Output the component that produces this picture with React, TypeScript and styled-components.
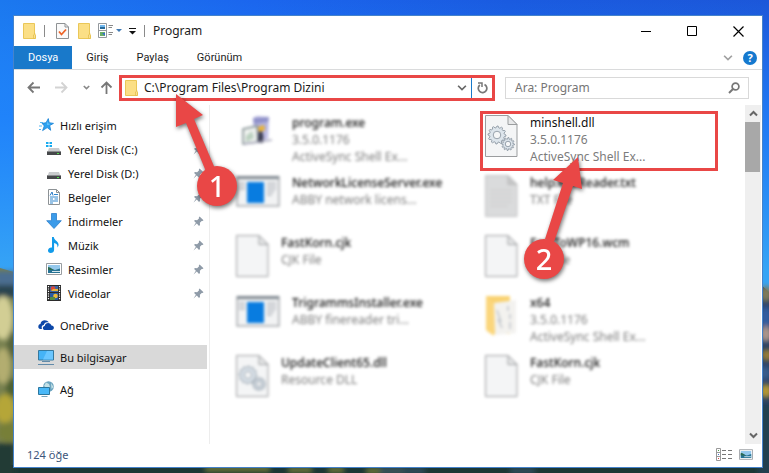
import React from "react";
import styled, { createGlobalStyle, css } from "styled-components";

const RED = "#e94746";

const GlobalStyle = createGlobalStyle`
  * { box-sizing: border-box; }
  html, body { margin: 0; padding: 0; }
  body, button, input {
    font-family: "Noto Sans", "Open Sans", sans-serif;
    font-size: 12px;
    color: #1c1c1c;
  }
  button { border: 0; padding: 0; background: none; cursor: pointer; }
  ul { list-style: none; margin: 0; padding: 0; }
  svg { display: block; flex: none; }
`;

const Desktop = styled.div`
  position: relative;
  display: flex;
  min-height: 100vh;
  padding: 15px 6px 5px 13px;
  overflow: hidden;
`;

const Wallpaper = styled.svg`
  position: absolute;
  inset: 0;
  width: 100%;
  height: 100%;
`;

const Window = styled.main`
  position: relative;
  flex: 1;
  min-width: 0;
  display: flex;
  flex-direction: column;
  background: #fff;
  border: 1px solid #4583cb;
`;

const TitleBar = styled.header`
  display: flex;
  align-items: center;
  height: 30px;
  padding: 0 1px 0 9px;
`;

const QuickTools = styled.div`
  display: flex;
  align-items: center;
`;

const Rule = styled.span`
  width: 1px;
  height: 12px;
  margin-left: 8px;
  background: #8a8a8a;
`;

const ToolButton = styled.button<{ $before: number }>`
  margin-left: ${(p) => p.$before}px;
`;

const Title = styled.h1`
  flex: 1;
  margin: 0 0 0 8px;
  font-size: 12px;
  font-weight: 400;
  line-height: 20px;
`;

const CaptionButton = styled.button`
  width: 46px;
  height: 30px;
  display: grid;
  place-items: center;
`;

const Ribbon = styled.nav`
  display: flex;
  height: 24px;
  border-bottom: 1px solid #dadbdc;
`;

const RibbonTab = styled.button<{ $active?: boolean }>`
  padding: 0 14px;
  font-family: Roboto, sans-serif;
  font-size: 11px;
  line-height: 23px;
  ${(p) =>
    p.$active &&
    css`
      background: #1979ca;
      color: #fff;
    `}
`;

const RibbonEnd = styled.div`
  display: flex;
  align-items: center;
  gap: 10px;
  margin-left: auto;
  padding-right: 5px;
`;

const HelpButton = styled.button`
  width: 14px;
  height: 14px;
  border-radius: 50%;
  background: #1579cf;
  color: #fff;
  font-size: 11px;
  font-weight: 700;
  line-height: 14px;
  text-align: center;
`;

const NavigationRow = styled.div`
  display: flex;
  align-items: center;
  height: 35px;
  padding: 0 13px;
`;

const Arrows = styled.div`
  display: flex;
  align-items: center;
  width: 92px;
  gap: 15px;
`;

const RecentGroup = styled.div`
  display: flex;
  align-items: center;
  gap: 10px;
`;

const AddressBox = styled.div`
  position: relative;
  z-index: 3;
  flex: 367;
  min-width: 0;
  height: 26px;
  display: flex;
  align-items: center;
  border: 3px solid ${RED};
  padding-left: 3px;
  background: #fff;
`;

const AddressInput = styled.input`
  flex: 1;
  min-width: 0;
  height: 20px;
  border: 0;
  outline: 0;
  padding: 0 0 0 6px;
  background: none;
`;

const RefreshButton = styled.button`
  width: 21px;
  height: 20px;
  display: grid;
  place-items: center;
  margin-left: 4px;
  border-left: 1px solid #1979ca;
`;

const SearchBox = styled.label`
  flex: 225;
  min-width: 0;
  height: 22px;
  margin-left: 10px;
  display: flex;
  align-items: center;
  padding: 0 8px 0 9px;
  border: 1px solid #d9d9d9;
`;

const SearchInput = styled.input`
  flex: 1;
  min-width: 0;
  height: 20px;
  border: 0;
  outline: 0;
  padding: 0;
  background: none;
  &::placeholder { color: #767676; opacity: 1; }
`;

const Body = styled.div`
  flex: 1;
  display: flex;
`;

const Sidebar = styled.nav`
  width: 196px;
  padding: 8px 2px 0 0;
  border-right: 1px solid #ededed;
`;

const Place = styled.a<{ $level?: number; $selected?: boolean; $apart?: boolean }>`
  display: flex;
  align-items: center;
  height: 24px;
  margin-top: ${(p) => (p.$apart ? 8 : 0)}px;
  padding: 0 3px 0 ${(p) => (p.$level === 2 ? 32 : 24)}px;
  color: #111;
  font-size: 11px;
  text-decoration: none;
  background: ${(p) => (p.$selected ? "#d9d9d9" : "transparent")};
  span { flex: 1; margin-left: 6px; }
`;

const FileList = styled.ul`
  flex: 1;
  min-width: 0;
  display: grid;
  grid-template-columns: repeat(2, minmax(0, 1fr));
  grid-auto-rows: 60px;
  column-gap: 11px;
  padding: 6px 27px 0 21px;
`;

const Tile = styled.li<{ $marked?: boolean }>`
  position: relative;
  z-index: ${(p) => (p.$marked ? 2 : 0)};
  border: 3px solid ${(p) => (p.$marked ? RED : "transparent")};
  padding-left: 2px;
`;

const TileContent = styled.div<{ $soft?: boolean }>`
  display: flex;
  gap: 12px;
  filter: ${(p) => (p.$soft ? "blur(1.4px)" : "none")};
`;

const FileText = styled.div<{ $soft?: boolean }>`
  min-width: 0;
  line-height: 17px;
  color: #7c7c7c;
  white-space: nowrap;
  div:first-child {
    color: #111;
    font-weight: ${(p) => (p.$soft ? 500 : 400)};
  }
`;

const ScrollTrack = styled.div`
  display: flex;
  flex-direction: column;
  align-items: stretch;
  width: 16px;
  margin-right: 1px;
  background: #efefef;
`;

const ScrollButton = styled.button`
  height: 17px;
  display: grid;
  place-items: center;
  &:last-child { margin-top: auto; }
`;

const ScrollThumb = styled.div`
  height: 50px;
  margin-right: 1px;
  background: #a8a8a8;
`;

const StatusBar = styled.footer`
  display: flex;
  align-items: center;
  gap: 6px;
  height: 23px;
  padding: 0 9px 3px 13px;
  color: #3d567b;
  font-size: 11px;
  span { flex: 1; }
`;

const Pointer = styled.div<{ $x: number; $y: number; $h: number; $w: number }>`
  position: absolute;
  left: ${(p) => p.$x}px;
  top: ${(p) => p.$y}px;
  width: ${(p) => p.$w}px;
  height: ${(p) => p.$h}px;
  pointer-events: none;
  filter: drop-shadow(1px 2px 2px rgba(0, 0, 0, 0.55));
`;

const Badge = styled.span<{ $right?: boolean }>`
  position: absolute;
  bottom: 0;
  ${(p) => (p.$right ? "right: 0;" : "left: 0;")}
  width: 40px;
  height: 40px;
  border-radius: 50%;
  background: ${RED};
  color: #fff;
  font: 500 29px/40px "Noto Sans", sans-serif;
  text-align: center;
`;

const FolderIcon = () => (
  <svg width="13" height="16" viewBox="0 0 13 16">
    <path d="M.5.5h11v11.3l1 .5v3.2H.5z" fill="#fbdf86" stroke="#eac758" />
    <path d="M10.5 15.5v-3.6l1.6-1.2v4.8z" fill="#fff0b8" stroke="#e3b93d" strokeWidth=".7" />
  </svg>
);

const Chevron = ({ up, color = "#666", w = 9, bold = 1.5 }: { up?: boolean; color?: string; w?: number; bold?: number }) => (
  <svg width={w} height={w} viewBox="0 0 9 9">
    <path d={up ? "M1 6.5 4.5 3 8 6.5" : "M1 2.5 4.5 6 8 2.5"} fill="none" stroke={color} strokeWidth={bold} />
  </svg>
);

const ARROW_PATHS = {
  left: "M13 6.5H1.5M6.5 1.5l-5 5 5 5",
  right: "M0 6.5h11.5M6.5 1.5l5 5-5 5",
  up: "M6.5 13V1.5M1.5 6.5l5-5 5 5",
};

const ArrowIcon = ({ kind }: { kind: keyof typeof ARROW_PATHS }) => (
  <svg width="13" height="13" viewBox="0 0 13 13" fill="none" stroke={kind === "right" ? "#d3d3d3" : "#777"} strokeWidth="1.8">
    <path d={ARROW_PATHS[kind]} />
  </svg>
);

const PinIcon = () => (
  <svg width="11" height="11" viewBox="0 0 11 11">
    <path d="m6.6.5 3.9 3.8-1 .8-.8-.2-1.8 1.9.1 2.2-1 .9-2.2-2.3L.5 10.4l2.4-3.6L1.1 5l.8-.9 2.2.1 2-1.9-.3-.9z" fill="#8f9ba8" />
  </svg>
);

const StarIcon = () => (
  <svg width="16" height="14" viewBox="-1 0 16 14">
    <path d="m9.3.6.9 4.1 4.3.7-3.8 2.1 1 4.8-3.5-2.7-4.6 3 1.7-4.7L3 5.3l4-.5z" fill="#2da2f0" stroke="#1780d4" strokeWidth=".8" />
    <path d="M1 4.5h3M0 8h3M0 11.5h2" stroke="#58b7f2" />
    <path d="m8.8 3 .5 2.8 2.5.3-3.7.8z" fill="#77cdff" />
  </svg>
);

const DiskIcon = ({ system }: { system?: boolean }) => (
  <svg width="16" height="16" viewBox="0 0 16 16">
    {system && <path d="M0 1h2.5v2H0zM3.5 1H6v2H3.5zM0 4h2.5v2H0zM3.5 4H6v2H3.5z" fill="#18abef" />}
    <path d="m3 7-1.5 4h13L13 7z" fill="#c9cbcd" />
    <path d="M1 10.5h14V14H1z" fill="#46484a" />
    <path d="M1 10.5h14" stroke="#8b8d8f" />
    <path d="M11 12h2v1h-2z" fill="#52e04d" />
  </svg>
);

const DocumentIcon = () => (
  <svg width="16" height="16" viewBox="0 0 16 16">
    <path d="M2.5.5h8l3 3v12h-11z" fill="#fff" stroke="#8d9295" />
    <path d="M10.5.5v3h3" fill="none" stroke="#8d9295" />
    <path d="M4 6.5 6 3l1 3.5" fill="none" stroke="#287bc8" />
    <path d="M8 5.5h4M4 8h8M4 10h3M8.5 10H12M4 12h8M4 14h3" stroke="#3187ce" />
  </svg>
);

const DownloadIcon = () => (
  <svg width="16" height="16" viewBox="0 0 16 16">
    <path d="M5.5.5h5v7.2h4.8L8 15.5.7 7.7h4.8z" fill="#3b9be9" stroke="#2b7fcb" strokeWidth=".8" />
  </svg>
);

const MusicIcon = () => (
  <svg width="16" height="16" viewBox="0 0 16 16">
    <path d="M6 0h1.8c.2 3.5 5.6 4.400 4.700 8.600-.3 1-.8 1.500-1.200 1.900.9-3-1.500-4.200-3.200-4.600v6.800C8.100 15 6.500 16 4.700 16 2.900 16 1.800 14.800 2 13.200c.2-2 2.300-3.200 4-2.700z" fill="#129bea" />
  </svg>
);

const PictureIcon = ({ w = 16, h = 12 }: { w?: number; h?: number }) => (
  <svg width={w} height={h} viewBox="0 0 16 12">
    <path d="M.5.5h15v11H.5z" fill="#fff" stroke="#989da1" />
    <path d="M2 2h12v8H2z" fill="#94c8ec" />
    <path d="m2 5 3 1 4 1 5-1.500V10H2z" fill="#267394" />
    <path d="m2 4 2 .5L8 7H2z" fill="#2b6950" />
    <path d="M6 8.500h8" stroke="#d5e7ee" />
  </svg>
);

const VideoIcon = () => (
  <svg width="16" height="16" viewBox="0 0 16 16">
    <path d="M1 0h14v16H1z" fill="#2b2b2b" />
    <path d="M2.500 1v14M13.500 1v14" stroke="#fff" strokeWidth="1.200" strokeDasharray="1.200 1.200" />
    <path d="M4 1h8v6H4z" fill="#3b67a6" />
    <path d="M4 8h8v7H4z" fill="#285ba3" />
    <circle cx="7" cy="3.500" r="2.300" fill="#db493a" />
    <path d="M7 4h5v2H5z" fill="#e5b33c" />
    <circle cx="9.500" cy="11" r="2.300" fill="#edba38" />
    <path d="M4 12h5v3H4z" fill="#568a43" />
  </svg>
);

const CloudIcon = () => (
  <svg width="16" height="16" viewBox="0 0 16 16">
    <path d="M1 11.500c-1.500-1.800-.4-4.200 1.500-4.400C2.500 3.500 8 1.500 11 5.500 7.500 4.300 6 6.500 5.800 8 3.600 8.200 3.400 10.500 4 12H2z" fill="#0c47a8" />
    <path d="M6.500 13C4.300 12.500 4.300 9.300 6.700 9c.4-3.800 5.800-4.200 6.700-.5 3.400.1 3.200 4.500.3 4.500z" fill="#0c47a8" />
  </svg>
);

const ComputerIcon = () => (
  <svg width="16" height="16" viewBox="0 0 16 16">
    <path d="M.5 1.500h15v9.500H.5z" fill="#45b3f6" stroke="#36799e" />
    <path d="M9 2h6v8.500H5z" fill="#6ac6ff" />
    <path d="M4 12.500h8M0 15.500h16" stroke="#628baa" />
  </svg>
);

const NetworkIcon = () => (
  <svg width="16" height="16" viewBox="0 0 16 16">
    <circle cx="10.500" cy="5.500" r="5.300" fill="#6ca4bf" />
    <path d="M8 1.500 11 3l1 3-2 2-4-3zM13 2l2.500 4-2 2z" fill="#c4e1e6" />
    <path d="M.5 6.500h11v7H.5z" fill="#49b8f8" stroke="#2c779e" />
    <path d="M3.500 15.500h6" stroke="#78a5bd" />
  </svg>
);

const cogPath = (cx: number, cy: number, r: number) => {
  const steps = 48;
  return (
    Array.from({ length: steps }, (_, i) => {
      const a = (i / steps) * Math.PI * 2;
      const d = i % 4 < 2 ? r : r - 1.7;
      return `${i ? "L" : "M"}${(cx + d * Math.cos(a)).toFixed(2)} ${(cy + d * Math.sin(a)).toFixed(2)}`;
    }).join("") + "Z"
  );
};

const Cog = ({ x, y, r }: { x: number; y: number; r: number }) => (
  <g fill="#dde5ec" stroke="#8d99a4" strokeWidth=".9">
    <path d={cogPath(x, y, r)} />
    <circle cx={x} cy={y} r={r * 0.42} fill="#f5f6f7" />
  </g>
);

const FileIcon = ({ cogs, dark }: { cogs?: boolean; dark?: boolean }) => (
  <svg width="33" height="44" viewBox="0 0 33 44">
    <path d="M.5 1.500H23l9 9v32H.5z" fill={dark ? "#dadbdc" : "#f4f5f6"} stroke={dark ? "#c0c1c2" : "#9b9d9f"} />
    <path d="M23 1.500v9h9z" fill={dark ? "#c6c7c8" : "#e7e8e9"} stroke={dark ? "#b8b8b8" : "#9b9d9f"} />
    {dark && <path d="M5 16h22M5 20h22M5 24h22M5 28h22M5 32h18" stroke="#ccc" />}
    {cogs && (
      <>
        <Cog x={12} y={21} r={9} />
        <Cog x={23} y={30} r={6.5} />
      </>
    )}
  </svg>
);

const AppIcon = () => (
  <svg width="44" height="34" viewBox="0 0 44 34">
    <path d="M1 3h42v29H1z" fill="#f2f3f4" stroke="#a9acaf" strokeWidth="1.500" />
    <path d="M1 3.500h42" stroke="#7e878f" strokeWidth="3" />
    <path d="M11 8h17v21H11z" fill="#087ce0" />
    <path d="M3 9h6M3 12h6M3 15h6M31 9h9M31 12h9M31 15h9M31 18h7M31 21h5" stroke="#b7bbc0" strokeWidth="1.500" />
  </svg>
);

const SetupIcon = () => (
  <svg width="44" height="34" viewBox="0 0 44 34">
    <path d="m17 4 4-2 12 1-1 22-14 3z" fill="#bdbce3" />
    <path d="m17 4 16-1-1 5-14 2z" fill="#8f91c9" />
    <path d="m20 12 11-1M20 15l11-1" stroke="#9fa0d0" />
    <path d="M7 15 21 12l1 16-15 2z" fill="#f0f3f0" stroke="#7b898c" strokeWidth="1.500" />
    <path d="m10 22 6-5 2 7-8 4z" fill="#bad0bf" />
    <path d="M23 16c4-1 5 6 4 13h-6c2-4 1-9 2-13z" fill="#3b3c50" />
    <path d="m22 13 6-2 1 5-6 2z" fill="#ecb535" />
    <path d="m8 30 14-2 14-2" stroke="#a6a6ba" strokeWidth="1.500" />
  </svg>
);

const BigFolderIcon = () => (
  <svg width="33" height="44" viewBox="0 0 33 44">
    <path d="M1 2h24v38H7L1 36z" fill="#f9d271" />
    <path d="m9 9 22-3v33L10 41z" fill="#f3f2ef" />
    <path d="m12 16 4 12M23 12v5M25 20v5M13 25l4 9M25 28v7" stroke="#bfc4ca" strokeWidth="1.500" />
    <path d="m1 2 8 8v32l-7-5z" fill="#fbd67c" />
  </svg>
);

type IconKind = "setup" | "app" | "file" | "dll" | "text" | "folder";

const FILES: { name: string; lines: string[]; icon: IconKind; marked?: boolean }[] = [
  { name: "program.exe", lines: ["3.5.0.1176", "ActiveSync Shell Ex..."], icon: "setup" },
  { name: "minshell.dll", lines: ["3.5.0.1176", "ActiveSync Shell Ex..."], icon: "dll", marked: true },
  { name: "NetworkLicenseServer.exe", lines: ["ABBY network licens..."], icon: "app" },
  { name: "help.exeReader.txt", lines: ["TXT File"], icon: "text" },
  { name: "FastKorn.cjk", lines: ["CJK File"], icon: "file" },
  { name: "FastToWP16.wcm", lines: ["CJK File"], icon: "file" },
  { name: "TrigrammsInstaller.exe", lines: ["ABBY finereader tri..."], icon: "app" },
  { name: "x64", lines: ["3.5.0.1176", "ActiveSync Shell Ex..."], icon: "folder" },
  { name: "UpdateClient65.dll", lines: ["Resource DLL"], icon: "dll" },
  { name: "FastKorn.cjk", lines: ["CJK File"], icon: "file" },
];

const FILE_ICONS: Record<IconKind, React.ReactNode> = {
  setup: <SetupIcon />,
  app: <AppIcon />,
  file: <FileIcon />,
  dll: <FileIcon cogs />,
  text: <FileIcon dark />,
  folder: <BigFolderIcon />,
};

const PLACES = [
  { label: "Yerel Disk (C:)", icon: <DiskIcon system /> },
  { label: "Yerel Disk (D:)", icon: <DiskIcon /> },
  { label: "Belgeler", icon: <DocumentIcon /> },
  { label: "İndirmeler", icon: <DownloadIcon /> },
  { label: "Müzik", icon: <MusicIcon /> },
  { label: "Resimler", icon: <PictureIcon /> },
  { label: "Videolar", icon: <VideoIcon /> },
];

const Scenery = () => (
  <Wallpaper viewBox="0 0 769 473" preserveAspectRatio="none" aria-hidden="true">
    <defs>
      <linearGradient id="sky" x2="1">
        <stop offset="0" stopColor="#1b78ef" />
        <stop offset=".33" stopColor="#1b66ee" />
        <stop offset=".66" stopColor="#1a5be0" />
        <stop offset="1" stopColor="#1c57d9" />
      </linearGradient>
      <linearGradient id="glow" x2="0" y2="1">
        <stop offset="0" stopColor="#2490ff" stopOpacity="0" />
        <stop offset=".25" stopColor="#2288ff" stopOpacity=".7" />
        <stop offset=".57" stopColor="#36a4f5" />
      </linearGradient>
      <filter id="haze"><feGaussianBlur stdDeviation="2.5" /></filter>
    </defs>
    <path d="M0 0h769v473H0z" fill="url(#sky)" />
    <path d="M0 0h769v473H0z" fill="url(#glow)" />
    <path d="M0 268 14 272V473H0z" fill="#77804f" />
    <path d="M760 284 769 292V473H760z" fill="#273f62" />
    <path d="M0 465h769v8H0z" fill="#1b3734" />
    <g filter="url(#haze)">
      <path d="M-5 271h22v15H-5z" fill="#4b6e91" />
      <path d="M-5 285h22v13H-5z" fill="#2c4550" />
      <ellipse cx="3" cy="318" rx="10" ry="22" fill="#d2ce94" />
      <ellipse cx="13" cy="345" rx="6" ry="14" fill="#56633b" />
      <ellipse cx="3" cy="366" rx="8" ry="18" fill="#b3ad70" />
      <ellipse cx="12" cy="388" rx="6" ry="10" fill="#4e6033" />
      <ellipse cx="5" cy="409" rx="10" ry="15" fill="#b5a638" />
      <ellipse cx="8" cy="432" rx="10" ry="10" fill="#777f38" />
      <path d="M-5 443h20v36H-5z" fill="#213b36" />
      <ellipse cx="766" cy="294" rx="6" ry="8" fill="#807b58" />
      <ellipse cx="766" cy="317" rx="6" ry="11" fill="#315da0" />
      <ellipse cx="766" cy="334" rx="6" ry="8" fill="#ac958a" />
      <ellipse cx="767" cy="355" rx="6" ry="6" fill="#967b35" />
      <ellipse cx="765" cy="373" rx="6" ry="7" fill="#385c8b" />
      <ellipse cx="766" cy="391" rx="6" ry="7" fill="#b69832" />
      <path d="M758 405h16v74h-16z" fill="#22404f" />
      <path d="M205 469h65M288 470h24M328 470h16M366 471h38" stroke="#777e38" strokeWidth="5" />
      <path d="M380 471h45M510 471h25" stroke="#38546c" strokeWidth="4" />
    </g>
  </Wallpaper>
);

export default function App() {
  return (
    <>
      <GlobalStyle />
      <Desktop>
        <Scenery />
        <Window>
          <TitleBar>
            <QuickTools>
              <FolderIcon />
              <Rule />
              <ToolButton $before={11} aria-label="Özellikler">
                <svg width="13" height="16" viewBox="0 0 13 16">
                  <path d="M.5.5H9L12.500 4v11.500H.5z" fill="#fafafa" stroke="#8f9294" />
                  <path d="M9 .5V4h3.500" fill="none" stroke="#8f9294" />
                  <path d="m3 8.500 2.500 3L10 6.500" fill="none" stroke="#ee6428" strokeWidth="1.800" />
                </svg>
              </ToolButton>
              <ToolButton $before={9} aria-label="Yeni klasör"><FolderIcon /></ToolButton>
              <ToolButton $before={7} aria-label="Görünüm seçenekleri">
                <svg width="24" height="16" viewBox="0 0 24 16">
                  <path d="M.5.5h8v14h-8zM.5 7.500h8" fill="#fff" stroke="#94999d" />
                  <path d="M2 2h5v4H2z" fill="#70b7ee" />
                  <path d="M2 4h5v2H2z" fill="#286b9b" />
                  <path d="M2 9h5v4H2z" fill="#68ae67" />
                  <path d="M4 10h3v3z" fill="#376fca" />
                  <path d="M10.500 2.500H15M10.500 4.500H14M10.500 9.500H15M10.500 11.500H14" stroke="#898989" />
                  <path d="M18 6h6l-3 3z" fill="#3f7ab5" />
                </svg>
              </ToolButton>
              <ToolButton $before={7} aria-label="Özelleştir">
                <svg width="7" height="8" viewBox="0 0 7 8">
                  <path d="M0 1.500h7" stroke="#111" />
                  <path d="M0 4h7L3.500 7.500z" fill="#111" />
                </svg>
              </ToolButton>
              <Rule />
            </QuickTools>
            <Title>Program</Title>
            <CaptionButton aria-label="Simge durumuna küçült">
              <svg width="10" height="10"><path d="M0 5.500h10" stroke="#000" /></svg>
            </CaptionButton>
            <CaptionButton aria-label="Ekranı kapla">
              <svg width="10" height="10"><path d="M.5.5h9v9h-9z" fill="none" stroke="#000" /></svg>
            </CaptionButton>
            <CaptionButton aria-label="Kapat">
              <svg width="11" height="11"><path d="m.5.5 10 10M10.500.5l-10 10" stroke="#000" strokeWidth="1.200" /></svg>
            </CaptionButton>
          </TitleBar>

          <Ribbon>
            <RibbonTab $active>Dosya</RibbonTab>
            <RibbonTab>Giriş</RibbonTab>
            <RibbonTab>Paylaş</RibbonTab>
            <RibbonTab>Görünüm</RibbonTab>
            <RibbonEnd>
              <button aria-label="Şeridi genişlet"><Chevron color="#a0a0a0" w={10} /></button>
              <HelpButton aria-label="Yardım">?</HelpButton>
            </RibbonEnd>
          </Ribbon>

          <NavigationRow>
            <Arrows>
              <button aria-label="Geri"><ArrowIcon kind="left" /></button>
              <button aria-label="İleri"><ArrowIcon kind="right" /></button>
              <RecentGroup>
                <button aria-label="Son konumlar"><Chevron w={7} color="#888" bold={2} /></button>
                <button aria-label="Yukarı"><ArrowIcon kind="up" /></button>
              </RecentGroup>
            </Arrows>
            <AddressBox>
              <FolderIcon />
              <AddressInput aria-label="Adres" defaultValue="C:\Program Files\Program Dizini" />
              <button aria-label="Önceki konumlar"><Chevron w={10} /></button>
              <RefreshButton aria-label="Yenile">
                <svg width="11" height="12" viewBox="0 0 11 12">
                  <path d="M7.500 2.500A4.300 4.300 0 1 1 2.800 3" fill="none" stroke="#777" strokeWidth="1.700" />
                  <path d="M1 1h4v4" fill="none" stroke="#777" strokeWidth="1.500" />
                </svg>
              </RefreshButton>
              <Pointer $x={53} $y={16} $w={62} $h={112}>
                <svg width="62" height="112" viewBox="0 0 62 112">
                  <path d="M1 0 28 21l-9 4 22 52-9 3L11 29l-10 4z" fill={RED} />
                </svg>
                <Badge $right>1</Badge>
              </Pointer>
            </AddressBox>
            <SearchBox>
              <SearchInput aria-label="Ara" placeholder="Ara: Program" />
              <svg width="12" height="12" viewBox="0 0 12 12" fill="none" stroke="#777">
                <circle cx="7.500" cy="4.500" r="3.400" strokeWidth="1.700" />
                <path d="M5 7 1 11" strokeWidth="2" />
              </svg>
            </SearchBox>
          </NavigationRow>

          <Body>
            <Sidebar>
              <Place href="#quick"><StarIcon /><span>Hızlı erişim</span></Place>
              {PLACES.map((p) => (
                <Place href="#place" key={p.label} $level={2}>
                  {p.icon}
                  <span>{p.label}</span>
                  <PinIcon />
                </Place>
              ))}
              <Place href="#onedrive" $apart><CloudIcon /><span>OneDrive</span></Place>
              <Place href="#computer" $apart $selected><ComputerIcon /><span>Bu bilgisayar</span></Place>
              <Place href="#network" $apart><NetworkIcon /><span>Ağ</span></Place>
            </Sidebar>
            <FileList>
              {FILES.map((f, i) => (
                <Tile key={i} $marked={f.marked}>
                  <TileContent $soft={!f.marked}>
                    {FILE_ICONS[f.icon]}
                    <FileText $soft={!f.marked}>
                      <div>{f.name}</div>
                      {f.lines.map((line) => <div key={line}>{line}</div>)}
                    </FileText>
                  </TileContent>
                  {f.marked && (
                    <Pointer $x={41} $y={43} $w={60} $h={122}>
                      <svg width="60" height="122" viewBox="0 0 60 122">
                        <path d="m54 0 4 32-9-3-19 56-9-3 18-56-10-3z" fill={RED} />
                      </svg>
                      <Badge>2</Badge>
                    </Pointer>
                  )}
                </Tile>
              ))}
            </FileList>
            <ScrollTrack>
              <ScrollButton aria-label="Yukarı kaydır"><Chevron up bold={2} /></ScrollButton>
              <ScrollThumb />
              <ScrollButton aria-label="Aşağı kaydır"><Chevron bold={2} /></ScrollButton>
            </ScrollTrack>
          </Body>

          <StatusBar>
            <span>124 öğe</span>
            <button aria-label="Ayrıntılar">
              <svg width="17" height="13" viewBox="0 0 17 13">
                <path d="M.5.5h4v12h-4zM.5 4.500h4M.5 8.500h4" fill="#fff" stroke="#999" />
                <path d="M6 2.500h4M12 2.500h4M6 6.500h4M12 6.500h4M6 10.500h4M12 10.500h4" stroke="#777" />
                <path d="M2 2h1v1H2z" fill="#4a9a47" />
                <path d="M2 6h1v1H2z" fill="#4772d0" />
                <path d="M2 10h1v1H2z" fill="#d44" />
              </svg>
            </button>
            <button aria-label="Büyük simgeler"><PictureIcon w={14} h={11} /></button>
          </StatusBar>
        </Window>
      </Desktop>
    </>
  );
}
